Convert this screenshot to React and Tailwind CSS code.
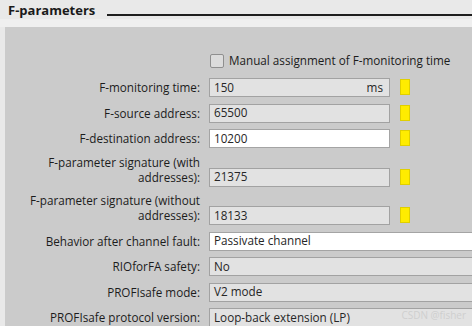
import React from 'react';

const rows = [
  { label: ['F-monitoring time:'], value: '150', unit: 'ms', dot: true },
  { label: ['F-source address:'], value: '65500', dot: true },
  { label: ['F-destination address:'], value: '10200', edit: true, dot: true },
  { label: ['F-parameter signature (with', 'addresses):'], value: '21375', dot: true },
  { label: ['F-parameter signature (without', 'addresses):'], value: '18133', dot: true },
  { label: ['Behavior after channel fault:'], value: 'Passivate channel', edit: true, wide: true },
  { label: ['RIOforFA safety:'], value: 'No', wide: true },
  { label: ['PROFIsafe mode:'], value: 'V2 mode', wide: true },
  { label: ['PROFIsafe protocol version:'], value: 'Loop-back extension (LP)', wide: true },
];

const Row = ({ row }) => (
  <div className="flex items-end">
    <div className="w-[195px] shrink-0 text-right leading-[15px] text-[#1c1c1c] pb-[2px]">
      {row.label.map((l) => (
        <div key={l}>{l}</div>
      ))}
    </div>
    <div
      className={`ml-[9px] h-[19px] shrink-0 flex items-center justify-between px-[4px] border text-[#262626] ${
        row.wide ? 'w-[300px]' : 'w-[181px]'
      } ${row.edit ? 'bg-white border-[#a4a4a4]' : 'bg-[#e2e2e2] border-[#a2a2a2]'}`}
    >
      <span>{row.value}</span>
      {row.unit && <span className="pr-[2px]">{row.unit}</span>}
    </div>
    {row.dot && (
      <div className="ml-[10px] mb-[2px] w-[10px] h-[16px] bg-[#ffec00] border border-[#e0cf00] shrink-0" />
    )}
  </div>
);

export default function App() {
  return (
    <div
      className="relative w-[472px] h-[326px] overflow-hidden bg-[#e9e9e9] text-[11.7px]"
      style={{ fontFamily: '"Open Sans", "Noto Sans", sans-serif' }}
    >
      {/* header */}
      <div className="flex items-end h-[19px] pl-[8px]">
        <span className="font-bold text-[13px] leading-[18px] text-[#1a1a1a]">F-parameters</span>
        <div className="flex-1 ml-[12px] mb-[3px] border-b-2 border-[#1e1e1e]" />
      </div>
      <div className="h-[8px] bg-[#efefef]" />

      {/* panel */}
      <div className="ml-[5px] h-[299px] bg-[#cbcbcb] pt-[26px]">
        <div className="flex items-center h-[15px] ml-[205px]">
          <div className="w-[14px] h-[14px] rounded-[2px] border border-[#8f8f8f] bg-[#dcdcdc]" />
          <span className="ml-[5px] text-[#1c1c1c]">Manual assignment of F-monitoring time</span>
        </div>
        <div className="mt-[10px] flex flex-col gap-[6.5px]">
          {rows.map((r) => (
            <Row key={r.label.join(' ')} row={r} />
          ))}
        </div>
      </div>

      <span className="absolute right-[6px] bottom-[3px] text-[10px] text-[#cfcfcf]">CSDN @fisher</span>
    </div>
  );
}
